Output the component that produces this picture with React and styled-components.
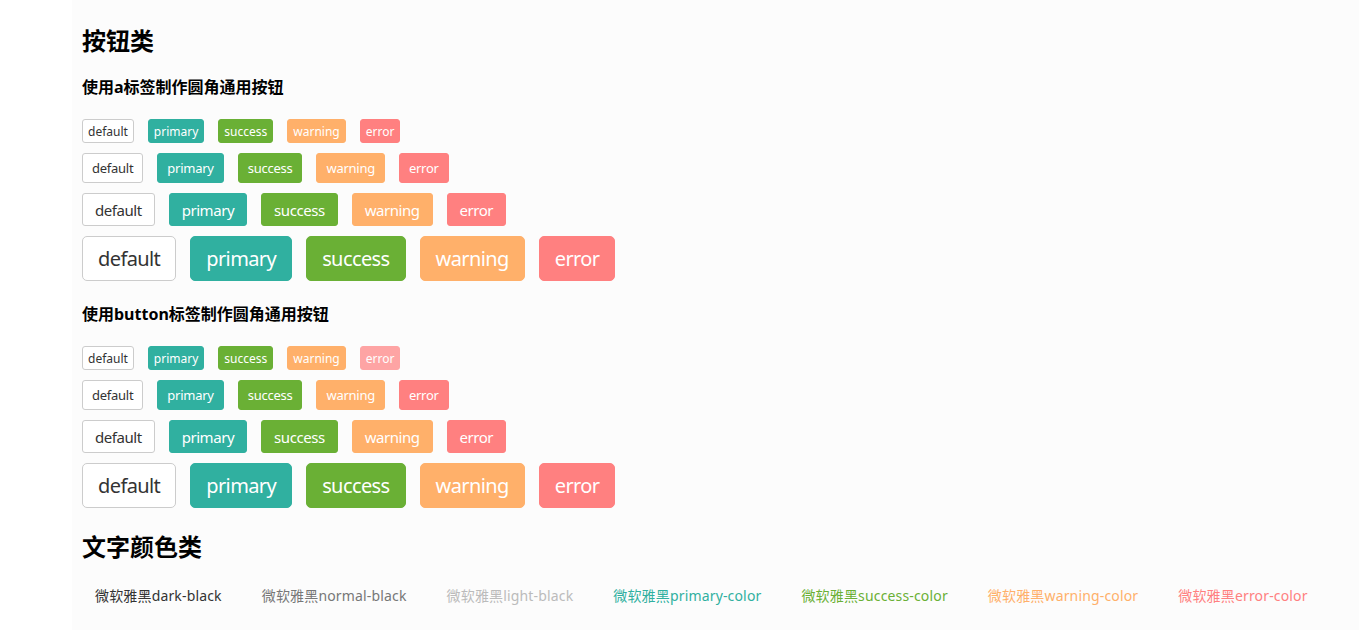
import React from 'react'
import styled, { createGlobalStyle, css } from 'styled-components'

const GlobalStyle = createGlobalStyle`
  body {
    margin: 0;
    background: #fff;
    font-family: 'Noto Sans', 'Noto Sans CJK SC', sans-serif;
  }
`

const colors = {
  default: { bg: '#fff', fg: '#333', border: '#ccc' },
  primary: { bg: '#30b0a0', fg: '#fff', border: '#30b0a0' },
  success: { bg: '#6ab035', fg: '#fff', border: '#6ab035' },
  warning: { bg: '#ffb06a', fg: '#fff', border: '#ffb06a' },
  error: { bg: '#ff8080', fg: '#fff', border: '#ff8080' },
}

const sizes = {
  xs: { h: 24, font: 12, pad: 5, radius: 3, spacing: 0 },
  sm: { h: 30, font: 13, pad: 9, radius: 3, spacing: -0.02 },
  md: { h: 33, font: 15, pad: 12, radius: 3, spacing: -0.03 },
  lg: { h: 45, font: 20, pad: 15, radius: 5, spacing: -0.03 },
}

const textColors = [
  ['dark-black', '#333'],
  ['normal-black', '#777'],
  ['light-black', '#bbb'],
  ['primary-color', '#30b0a0'],
  ['success-color', '#6ab035'],
  ['warning-color', '#ffb06a'],
  ['error-color', '#ff8080'],
]

// page
const App = () => (
  <Page>
    <GlobalStyle />
    <Title>按钮类</Title>
    <SubTitle>使用a标签制作圆角通用按钮</SubTitle>
    <ButtonGroup>
      {Object.keys(sizes).map(size => (
        <ButtonRow key={size}>
          {Object.keys(colors).map(kind => (
            <LinkButton key={kind} href="#" $kind={kind} $size={size}>
              {kind}
            </LinkButton>
          ))}
        </ButtonRow>
      ))}
    </ButtonGroup>

    <SubTitle>使用button标签制作圆角通用按钮</SubTitle>
    <ButtonGroup>
      {Object.keys(sizes).map(size => (
        <ButtonRow key={size}>
          {Object.keys(colors).map(kind => (
            <RealButton
              key={kind}
              $kind={kind}
              $size={size}
              disabled={size === 'xs' && kind === 'error'}
            >
              {kind}
            </RealButton>
          ))}
        </ButtonRow>
      ))}
    </ButtonGroup>

    <Title>文字颜色类</Title>
    <ColorRow>
      {textColors.map(([name, color]) => (
        <ColorText key={name} $color={color}>
          微软雅黑{name}
        </ColorText>
      ))}
    </ColorRow>
  </Page>
)

// styles
const Page = styled.div`
  margin-left: 72px;
  min-height: 100vh;
  padding: 24px 10px 0;
  background: #fcfcfc;
  box-sizing: border-box;
`

const Title = styled.h2`
  margin: 0 0 18px;
  font-size: 24px;
  line-height: 34px;
  font-weight: 700;
  color: #000;
`

const SubTitle = styled.h4`
  margin: 0 0 21px;
  font-size: 16px;
  line-height: 22px;
  font-weight: 700;
  color: #000;
`

const ButtonGroup = styled.div`
  display: flex;
  flex-direction: column;
  gap: 10px;
  margin-bottom: 22px;

  &:last-of-type {
    margin-bottom: 20px;
  }
`

const ButtonRow = styled.div`
  display: flex;
  align-items: flex-start;
  gap: 14px;
`

const buttonStyle = css`
  display: inline-flex;
  align-items: center;
  justify-content: center;
  box-sizing: border-box;
  margin: 0;
  font-family: 'Noto Sans', 'Noto Sans CJK SC', sans-serif;
  text-decoration: none;
  cursor: pointer;
  height: ${p => sizes[p.$size].h}px;
  padding: 0 ${p => sizes[p.$size].pad}px;
  font-size: ${p => sizes[p.$size].font}px;
  letter-spacing: ${p => sizes[p.$size].spacing}em;
  border-radius: ${p => sizes[p.$size].radius}px;
  border: 1px solid ${p => colors[p.$kind].border};
  background: ${p => colors[p.$kind].bg};
  color: ${p => colors[p.$kind].fg};
`

const LinkButton = styled.a`
  ${buttonStyle}
`

const RealButton = styled.button`
  ${buttonStyle}

  &:disabled {
    opacity: 0.7;
    cursor: not-allowed;
  }
`

const ColorRow = styled.div`
  display: flex;
  gap: 40px;
  margin-top: 22px;
  padding-left: 13px;
`

const ColorText = styled.span`
  font-size: 14px;
  line-height: 20px;
  letter-spacing: 0.16px;
  color: ${p => p.$color};
`

export default App
